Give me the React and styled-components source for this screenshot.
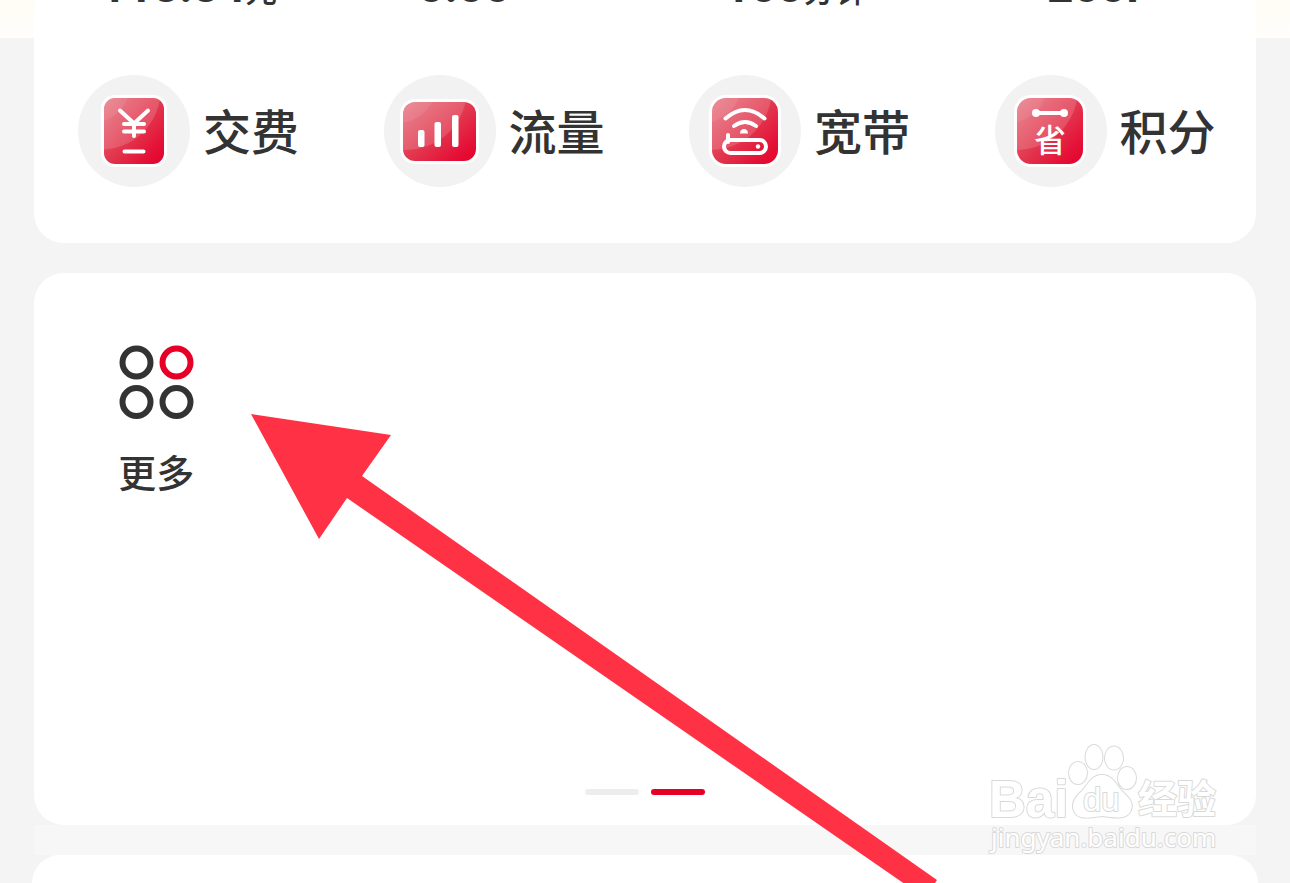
import React from "react";
import styled, { createGlobalStyle } from "styled-components";

const GlobalStyle = createGlobalStyle`
  * {
    box-sizing: border-box;
  }

  body {
    margin: 0;
    background: #f4f4f4;
    color: #333;
    font-family: Roboto, "Noto Sans CJK SC", sans-serif;
  }

  button {
    border: 0;
    padding: 0;
    background: none;
    color: inherit;
    font: inherit;
    cursor: pointer;
  }
`;

const balances = [
  { value: "118.84", unit: "元" },
  { value: "0.00", unit: "" },
  { value: "100", unit: "分钟" },
  { value: "200P", unit: "" },
];

const Plate = ({ id, x, y, width, height, r }) => (
  <>
    <defs>
      <linearGradient id={`${id}-red`} x1="0" y1="0" x2="1" y2="1">
        <stop offset="0" stopColor="#e5707c" />
        <stop offset="0.5" stopColor="#e2384f" />
        <stop offset="0.8" stopColor="#e51238" />
        <stop offset="1" stopColor="#e4002b" />
      </linearGradient>
      <clipPath id={`${id}-clip`}>
        <rect x={x} y={y} width={width} height={height} rx={r} />
      </clipPath>
    </defs>
    <circle cx="56" cy="56" r="56" fill="#f2f2f2" />
    <rect
      x={x - 3}
      y={y - 3}
      width={width + 6}
      height={height + 6}
      rx={r + 3}
      fill="#fff"
    />
    <rect
      x={x}
      y={y}
      width={width}
      height={height}
      rx={r}
      fill={`url(#${id}-red)`}
    />
    <g clipPath={`url(#${id}-clip)`} fill="#fff">
      <circle cx="22" cy="14" r="61" fillOpacity="0.15" />
      <circle cx="14" cy="10" r="38" fillOpacity="0.08" />
    </g>
  </>
);

const PayIcon = () => (
  <RoundIcon viewBox="0 0 112 112" aria-hidden="true">
    <Plate id="pay" x={26} y={23} width={60} height={66} r={11} />
    <g fill="none" stroke="#fff" strokeWidth="4" strokeLinecap="round">
      <path d="M42 35.5L56 48.5L70 35.5M56 48.5V61" />
      <path d="M46 49H66M46 56.5H66M46.5 76.5H65.5" />
    </g>
  </RoundIcon>
);

const DataIcon = () => (
  <RoundIcon viewBox="0 0 112 112" aria-hidden="true">
    <Plate id="data" x={19} y={27} width={73} height={59} r={12} />
    <g fill="#fff">
      <rect x="34" y="55" width="6.5" height="17" rx="2" />
      <rect x="50.5" y="47" width="6.5" height="25" rx="2" />
      <rect x="68" y="40" width="6.5" height="32" rx="2" />
    </g>
  </RoundIcon>
);

const BroadbandIcon = () => (
  <RoundIcon viewBox="0 0 112 112" aria-hidden="true">
    <Plate id="wifi" x={23} y={23} width={66} height={66} r={14} />
    <g fill="none" stroke="#fff" strokeWidth="4" strokeLinecap="round">
      <path d="M36.5 43.5Q56 26.5 75.5 43.5" />
      <path d="M45 51Q56 43 67 51" />
      <path d="M39 60V67" />
      <rect x="35" y="65" width="42" height="13" rx="6.5" />
    </g>
    <path d="M51 58.5a4 4.5 0 0 1 8 0z" fill="#fff" />
    <circle cx="69" cy="71.5" r="2.2" fill="#fff" />
  </RoundIcon>
);

const PointsIcon = () => (
  <RoundIcon viewBox="0 0 112 112" aria-hidden="true">
    <Plate id="points" x={22} y={23} width={66} height={66} r={14} />
    <path d="M41 38H69" stroke="#fff" strokeWidth="4" />
    <circle cx="41" cy="38" r="4" fill="#fff" />
    <circle cx="69" cy="38" r="4" fill="#fff" />
    <text
      x="55"
      y="77"
      fill="#fff"
      fontFamily="Noto Sans CJK SC, sans-serif"
      fontSize="32"
      fontWeight="500"
      textAnchor="middle"
    >
      省
    </text>
  </RoundIcon>
);

const quickLinks = [
  { label: "交费", Icon: PayIcon },
  { label: "流量", Icon: DataIcon },
  { label: "宽带", Icon: BroadbandIcon },
  { label: "积分", Icon: PointsIcon },
];

const Watermark = () => (
  <WatermarkSvg viewBox="0 0 240 120" aria-label="Baidu 经验">
    <g
      fill="#fff"
      stroke="#d9d9d9"
      strokeWidth="2"
      strokeLinejoin="round"
      paintOrder="stroke"
    >
      <text x="4" y="77" fontFamily="Liberation Sans, sans-serif" fontWeight="700" fontSize="51">
        Bai
      </text>
      <ellipse cx="93" cy="33" rx="9" ry="11" />
      <ellipse cx="109" cy="17" rx="8.5" ry="12" />
      <ellipse cx="129" cy="18" rx="9" ry="11.5" />
      <ellipse cx="142" cy="38" rx="9" ry="11" />
      <path d="M117 35C106 35 103 45 97 51C90 57 86 64 89 71C93 81 106 77 117 76C128 77 142 81 146 70C149 62 143 57 137 51C131 45 128 35 117 35Z" />
      <text x="98" y="71" fontFamily="Liberation Sans, sans-serif" fontSize="33">
        du
      </text>
      <text x="153" y="73" fontFamily="Noto Sans CJK SC, sans-serif" fontWeight="700" fontSize="39">
        经验
      </text>
      <text x="6" y="107" fontFamily="Noto Sans, sans-serif" fontSize="26">
        jingyan.baidu.com
      </text>
    </g>
  </WatermarkSvg>
);

const App = () => {
  return (
    <Page>
      <GlobalStyle />
      <Banner>
        <BalanceCard>
          {/* balances, scrolled almost out of view */}
          <BalanceRow>
            {balances.map(({ value, unit }) => (
              <Balance key={value}>
                {value}
                {unit && <Unit>{unit}</Unit>}
              </Balance>
            ))}
          </BalanceRow>
          <QuickRow>
            {quickLinks.map(({ label, Icon }) => (
              <QuickLink key={label}>
                <Icon />
                <QuickLabel>{label}</QuickLabel>
              </QuickLink>
            ))}
          </QuickRow>
        </BalanceCard>
      </Banner>

      <ServiceCard>
        <ServiceGrid>
          <Service>
            <MoreIcon viewBox="0 0 74 74" aria-hidden="true">
              <g fill="none" stroke="#333" strokeWidth="6">
                <circle cx="17.5" cy="17.5" r="14" />
                <circle cx="57.5" cy="17.5" r="14" stroke="#e60027" />
                <circle cx="17.5" cy="57" r="14" />
                <circle cx="57.5" cy="57" r="14" />
              </g>
            </MoreIcon>
            更多
          </Service>
        </ServiceGrid>
        <Pager>
          <PagerDot aria-label="1" />
          <PagerDot aria-label="2" $active />
        </Pager>
      </ServiceCard>

      <Divider />
      <NextCard />

      <Arrow viewBox="0 0 690 469" aria-hidden="true">
        <path
          d="M0 0L140 21L111 62L686 466L674 484L96 84L68 125Z"
          fill="#ff3144"
        />
      </Arrow>
      <Watermark />
    </Page>
  );
};

const Page = styled.main`
  position: relative;
  display: flex;
  flex-direction: column;
  min-height: 100vh;
  overflow: hidden;
`;

const Banner = styled.div`
  padding: 0 34px;
  background: linear-gradient(#fffcf5, #fffefb 38px, #f4f4f4 38px);
`;

const BalanceCard = styled.section`
  display: flow-root;
  padding-bottom: 56px;
  border-radius: 0 0 30px 30px;
  background: #fff;
`;

const BalanceRow = styled.div`
  display: grid;
  grid-template-columns: 318fr 306fr 323fr 209fr;
  height: 56px;
  margin-top: -42px;
  padding-left: 66px;
`;

const Balance = styled.div`
  display: flex;
  align-items: baseline;
  font-size: 46px;
  font-weight: 700;
  line-height: 56px;
  white-space: nowrap;
`;

const Unit = styled.small`
  font-size: 32px;
  font-weight: 500;
  line-height: 36px;
`;

const QuickRow = styled.nav`
  display: grid;
  grid-template-columns: repeat(4, 1fr);
  margin-top: 61px;
`;

const QuickLink = styled.button`
  && {
    display: flex;
    align-items: center;
    gap: 13px;
    padding-left: 44px;
  }
`;

const QuickLabel = styled.span`
  padding-bottom: 4px;
  font-family: "Noto Sans CJK SC", sans-serif;
  font-size: 48px;
  font-weight: 500;
  line-height: 72px;
  white-space: nowrap;
`;

const RoundIcon = styled.svg`
  flex: none;
  width: 112px;
  height: 112px;
`;

const ServiceCard = styled.section`
  display: flex;
  flex-direction: column;
  justify-content: space-between;
  min-height: 552px;
  margin: 30px 34px 0;
  padding: 72px 0 30px;
  border-radius: 30px;
  background: #fff;
`;

const ServiceGrid = styled.div`
  display: grid;
  grid-template-columns: repeat(5, 1fr);
`;

const Service = styled.button`
  && {
    display: flex;
    flex-direction: column;
    align-items: center;
    gap: 24px;
    font-family: "Noto Sans CJK SC", sans-serif;
    font-size: 38px;
    font-weight: 500;
    line-height: 56px;
  }
`;

const MoreIcon = styled.svg`
  width: 74px;
  height: 74px;
  overflow: visible;
`;

const Pager = styled.div`
  display: flex;
  justify-content: center;
  gap: 12px;
`;

const PagerDot = styled.button`
  && {
    width: 54px;
    height: 6px;
    border-radius: 3px;
    background: ${({ $active }) => ($active ? "#e60027" : "#ededed")};
  }
`;

const Divider = styled.div`
  height: 30px;
  margin: 0 34px;
  background: #f7f7f7;
`;

const NextCard = styled.section`
  flex: 1;
  min-height: 28px;
  margin: 0 32px;
  border-radius: 30px 30px 0 0;
  background: #fff;
`;

const Arrow = styled.svg`
  position: absolute;
  top: 414px;
  left: 251px;
  width: 690px;
  height: 469px;
  pointer-events: none;
`;

const WatermarkSvg = styled.svg`
  position: absolute;
  right: 65px;
  bottom: 23px;
  width: 240px;
  height: 120px;
  pointer-events: none;
`;

export default App;
